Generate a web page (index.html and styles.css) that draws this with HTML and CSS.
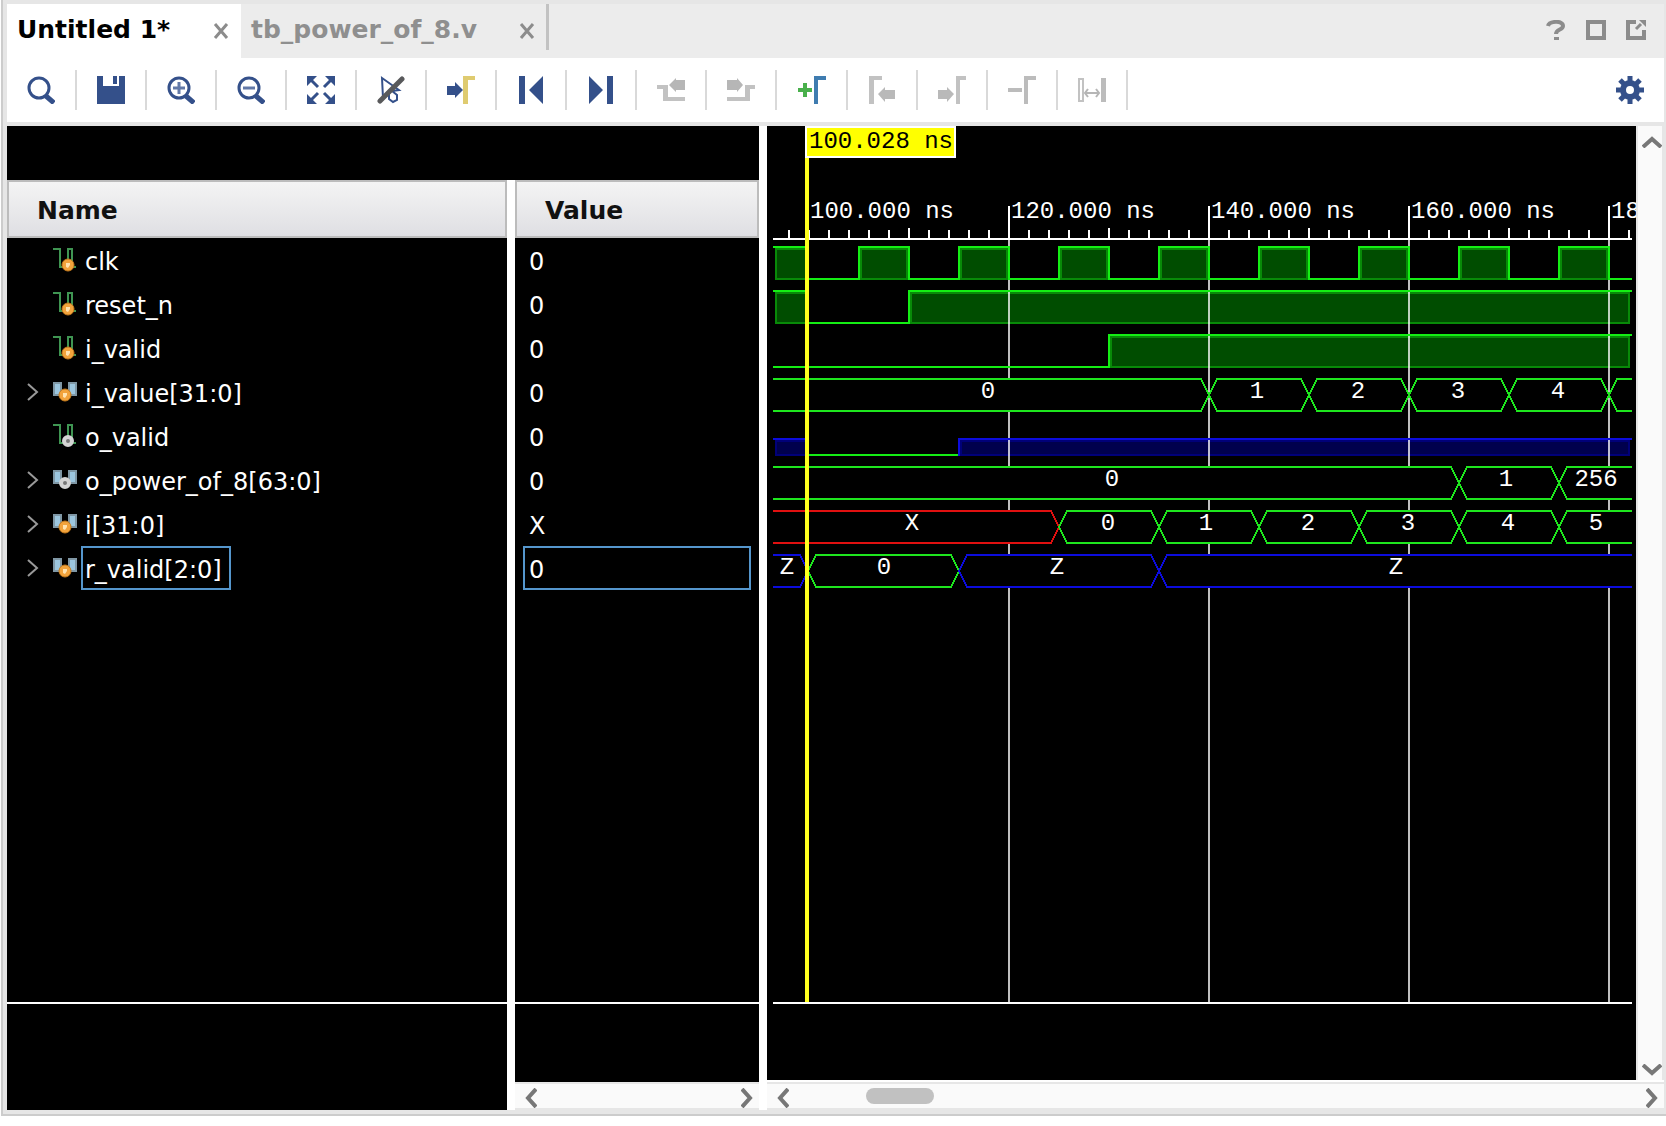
FILE: index.html
```html
<!DOCTYPE html>
<html lang="en">
<head>
<meta charset="utf-8">
<title>Waveform viewer</title>
<link rel="stylesheet" href="styles.css">
</head>
<body>
<svg class="defs" aria-hidden="true">
  <defs>
    <symbol id="close" viewBox="0 0 16 16"><path d="M2 1L14 15M14 1L2 15" stroke="#8c8c8c" stroke-width="3" fill="none"/></symbol>
    <symbol id="left" viewBox="0 0 12 20"><path d="M11 1L3 10L11 19" stroke="#777" stroke-width="4" fill="none"/></symbol>
    <symbol id="right" viewBox="0 0 12 20"><path d="M1 1L9 10L1 19" stroke="#777" stroke-width="4" fill="none"/></symbol>
    <symbol id="up" viewBox="0 0 20 12"><path d="M1 11L10 3L19 11" stroke="#777" stroke-width="4" fill="none"/></symbol>
    <symbol id="down" viewBox="0 0 20 12"><path d="M1 1L10 9L19 1" stroke="#777" stroke-width="4" fill="none"/></symbol>
    <symbol id="expand" viewBox="0 0 12 18"><path d="M1 1L10 9L1 17" stroke="#999" stroke-width="2" fill="none"/></symbol>
    <symbol id="wire" viewBox="0 0 24 24">
      <path d="M0 1H7V19H11M15 19V1H19V19H23" stroke="#3f9552" stroke-width="2" fill="none"/>
    </symbol>
    <symbol id="bus" viewBox="0 0 24 24">
      <path d="M6 10H18V15L15 18H9L6 15Z" fill="#7f97a5"/>
      <path d="M1 3H8V15H1ZM16 3H23V15H16Z" fill="#9cc6de" stroke="#7f97a5" stroke-width="2"/>
    </symbol>
    <symbol id="dot-in" viewBox="0 0 14 14"><circle cx="7" cy="7" r="6" fill="#f2a33c" stroke="#c47a1c"/><path d="M5 9V5H9V7L7 10Z" fill="#ffe3b0"/></symbol>
    <symbol id="dot-out" viewBox="0 0 14 14"><circle cx="7" cy="7" r="4" fill="#777" stroke="#d4d4d4" stroke-width="4"/></symbol>
  </defs>
</svg>

<main class="app">
  <header class="tabs">
    <div class="tab tab-active"><a href="#wave">Untitled 1*</a><button class="close" aria-label="Close Untitled 1"><svg width="16" height="16"><use href="#close"/></svg></button></div>
    <div class="tab"><a href="#source">tb_power_of_8.v</a><button class="close" aria-label="Close tb_power_of_8.v"><svg width="16" height="16"><use href="#close"/></svg></button></div>
    <div class="window-tools">
      <button aria-label="Help"><svg width="20" height="20" viewBox="0 0 20 20"><path d="M2 6C3 1 17 0 17 6C17 10 10 9 10 14" fill="none" stroke="#8c8c8c" stroke-width="4"/><path d="M8 17h5v3h-5z" fill="#8c8c8c"/></svg></button>
      <button aria-label="Maximize"><svg width="20" height="20" viewBox="0 0 20 20"><path d="M2 2H18V18H2Z" fill="none" stroke="#8c8c8c" stroke-width="4"/></svg></button>
      <button aria-label="Float"><svg width="20" height="20" viewBox="0 0 20 20"><path d="M10 2H2V18H18V10" fill="none" stroke="#8c8c8c" stroke-width="4"/><path d="M10 9L15 4" stroke="#8c8c8c" stroke-width="3"/><path d="M13 0H20V7Z" fill="#8c8c8c"/></svg></button>
    </div>
  </header>

  <nav class="toolbar" aria-label="Waveform tools">
    <button aria-label="Search"><svg viewBox="0 0 28 28"><circle cx="12" cy="12" r="10" fill="none" stroke="#34508a" stroke-width="3"/><path d="M19 20L27 27" stroke="#34508a" stroke-width="5"/></svg></button>
    <button aria-label="Save"><svg viewBox="0 0 28 28"><path d="M0 0H6V10H22V0H28V28H0Z M16 0H20V8H16Z" fill="#34508a"/></svg></button>
    <button aria-label="Zoom in"><svg viewBox="0 0 28 28"><circle cx="12" cy="12" r="10" fill="none" stroke="#34508a" stroke-width="3"/><path d="M19 20L27 27" stroke="#34508a" stroke-width="5"/><path d="M6 12H18M12 6V18" stroke="#6279a8" stroke-width="3"/></svg></button>
    <button aria-label="Zoom out"><svg viewBox="0 0 28 28"><circle cx="12" cy="12" r="10" fill="none" stroke="#34508a" stroke-width="3"/><path d="M19 20L27 27" stroke="#34508a" stroke-width="5"/><path d="M6 12H18" stroke="#6279a8" stroke-width="3"/></svg></button>
    <button aria-label="Zoom fit"><svg viewBox="0 0 28 28"><path d="M0 0H10L0 10ZM28 0V10L18 0ZM0 28V18L10 28ZM28 28H18L28 18Z" fill="#34508a"/><path d="M3 3L11 11M25 3L17 11M3 25L11 17M25 25L17 17" stroke="#34508a" stroke-width="3"/></svg></button>
    <button aria-label="Snap to transition off"><svg viewBox="0 0 28 28"><path d="M5 2L22 14L15 15L20 19V24L16 26L12 23V18L6 22Z" fill="none" stroke="#34508a" stroke-width="2"/><path d="M3 25L25 3" stroke="#58595b" stroke-width="5" stroke-linecap="round"/></svg></button>
    <button aria-label="Go to cursor"><svg viewBox="0 0 28 28"><path d="M0 10H8V6L16 14L8 22V19H0Z" fill="#34508a"/><path d="M16 0H28V4H21V28H16Z" fill="#dfcb70"/></svg></button>
    <button aria-label="Go to start"><svg viewBox="0 0 28 28"><path d="M2 0H8V28H2ZM26 0V28L12 14Z" fill="#34508a"/></svg></button>
    <button aria-label="Go to end"><svg viewBox="0 0 28 28"><path d="M2 0V28L16 14ZM20 0H26V28H20Z" fill="#34508a"/></svg></button>
    <button aria-label="Previous transition"><svg viewBox="0 0 28 28"><path d="M0 9H11V21H28V25H6V13H0Z" fill="#c2c2c2"/><path d="M12 9L19 2V4H28V14H19V16Z" fill="#b6b6b6"/></svg></button>
    <button aria-label="Next transition"><svg viewBox="0 0 28 28"><path d="M28 9H18V21H0V25H23V13H28Z" fill="#c2c2c2"/><path d="M16 9L10 2V4H0V14H10V16Z" fill="#b6b6b6"/></svg></button>
    <button class="wide" aria-label="Add marker"><svg viewBox="0 0 28 28"><path d="M0 14H14M7 7V21" stroke="#49b04c" stroke-width="4"/><path d="M16 0H28V4H20V28H16Z" fill="#3f7cb0"/></svg></button>
    <button aria-label="Previous marker"><svg viewBox="0 0 28 28"><path d="M1 0H14V4H6V28H1Z" fill="#c2c2c2"/><path d="M10 18L17 11V14H27V23H17V26Z" fill="#b9b9b9"/></svg></button>
    <button aria-label="Next marker"><svg viewBox="0 0 28 28"><path d="M18 0H28V4H22V28H18Z" fill="#c2c2c2"/><path d="M16 18L9 11V14H0V23H9V26Z" fill="#b9b9b9"/></svg></button>
    <button aria-label="Remove marker"><svg viewBox="0 0 28 28"><path d="M0 12H14V16H0ZM16 0H28V4H20V28H16Z" fill="#bcbcbc"/></svg></button>
    <button aria-label="Swap cursors"><svg viewBox="0 0 28 28"><path d="M1 3H5V25H1Z" fill="none" stroke="#c2c2c2" stroke-width="2"/><path d="M23 2H28V26H23Z" fill="#bcbcbc"/><path d="M7 17H21M10 13L7 17L10 21M18 13L21 17L18 21" fill="none" stroke="#b6b6b6" stroke-width="2"/></svg></button>
    <button class="settings" aria-label="Settings"><svg viewBox="0 0 28 28"><circle cx="14" cy="14" r="7" fill="none" stroke="#34508a" stroke-width="6"/><path d="M14 0V5M14 23V28M0 14H5M23 14H28M4 4L8 8M20 20L24 24M24 4L20 8M4 24L8 20" stroke="#34508a" stroke-width="5"/></svg></button>
  </nav>

  <section class="workspace">
    <div class="signals">
      <div class="pane name-pane">
        <table>
          <thead><tr><th>Name</th></tr></thead>
          <tbody>
            <tr><td><div class="signal"><span class="toggle"></span><svg class="kind"><use href="#wire"/><use href="#dot-in" x="8" y="10" width="14" height="14"/></svg><span class="label">clk</span></div></td></tr>
            <tr><td><div class="signal"><span class="toggle"></span><svg class="kind"><use href="#wire"/><use href="#dot-in" x="8" y="10" width="14" height="14"/></svg><span class="label">reset_n</span></div></td></tr>
            <tr><td><div class="signal"><span class="toggle"></span><svg class="kind"><use href="#wire"/><use href="#dot-in" x="8" y="10" width="14" height="14"/></svg><span class="label">i_valid</span></div></td></tr>
            <tr><td><div class="signal"><button class="toggle" aria-label="Expand i_value"><svg width="12" height="18"><use href="#expand"/></svg></button><svg class="kind"><use href="#bus"/><use href="#dot-in" x="5" y="8" width="14" height="14"/></svg><span class="label">i_value[31:0]</span></div></td></tr>
            <tr><td><div class="signal"><span class="toggle"></span><svg class="kind"><use href="#wire"/><use href="#dot-out" x="8" y="10" width="14" height="14"/></svg><span class="label">o_valid</span></div></td></tr>
            <tr><td><div class="signal"><button class="toggle" aria-label="Expand o_power_of_8"><svg width="12" height="18"><use href="#expand"/></svg></button><svg class="kind"><use href="#bus"/><use href="#dot-out" x="5" y="8" width="14" height="14"/></svg><span class="label">o_power_of_8[63:0]</span></div></td></tr>
            <tr><td><div class="signal"><button class="toggle" aria-label="Expand i"><svg width="12" height="18"><use href="#expand"/></svg></button><svg class="kind"><use href="#bus"/><use href="#dot-in" x="5" y="8" width="14" height="14"/></svg><span class="label">i[31:0]</span></div></td></tr>
            <tr><td><div class="signal"><button class="toggle" aria-label="Expand r_valid"><svg width="12" height="18"><use href="#expand"/></svg></button><svg class="kind"><use href="#bus"/><use href="#dot-in" x="5" y="8" width="14" height="14"/></svg><span class="label selected">r_valid[2:0]</span></div></td></tr>
          </tbody>
        </table>
        <div class="pane-foot"></div>
      </div>
      <div class="pane value-pane">
        <table>
          <thead><tr><th>Value</th></tr></thead>
          <tbody>
            <tr><td><div class="value">0</div></td></tr>
            <tr><td><div class="value">0</div></td></tr>
            <tr><td><div class="value">0</div></td></tr>
            <tr><td><div class="value">0</div></td></tr>
            <tr><td><div class="value">0</div></td></tr>
            <tr><td><div class="value">0</div></td></tr>
            <tr><td><div class="value">X</div></td></tr>
            <tr><td><div class="value selected">0</div></td></tr>
          </tbody>
        </table>
        <div class="pane-foot"></div>
        <div class="hscroll">
          <button aria-label="Scroll values left"><svg width="12" height="20"><use href="#left"/></svg></button>
          <button class="end" aria-label="Scroll values right"><svg width="12" height="20"><use href="#right"/></svg></button>
        </div>
      </div>
    </div>

    <div class="waves" id="wave">
      <div class="wave-row">
        <div class="wave-view">
          <svg class="plot">
            <defs>
              <pattern id="minor" patternUnits="userSpaceOnUse" x="26" y="104" width="20" height="8"><rect x="9" width="2" height="8" fill="#fff"/></pattern>
              <pattern id="mid" patternUnits="userSpaceOnUse" x="126" y="102" width="200" height="10"><rect x="9" width="2" height="10" fill="#fff"/></pattern>
            </defs>

            <!-- time ruler -->
            <rect y="104" width="100%" height="8" fill="url(#minor)"/>
            <rect y="102" width="100%" height="10" fill="url(#mid)"/>
            <path class="major" d="M236 80V113M436 80V113M636 80V113M836 80V113"/>
            <line class="major" x1="0" x2="100%" y1="113" y2="113"/>
            <g class="time">
              <text x="37" y="92">100.000 ns</text>
              <text x="238" y="92">120.000 ns</text>
              <text x="438" y="92">140.000 ns</text>
              <text x="638" y="92">160.000 ns</text>
              <text x="838" y="92">180.000 ns</text>
            </g>

            <!-- level fills -->
            <g class="high">
              <path d="M3 123H34V153H3ZM88 123H134V153H88ZM188 123H234V153H188ZM288 123H334V153H288ZM388 123H434V153H388ZM488 123H534V153H488ZM588 123H634V153H588ZM688 123H734V153H688ZM788 123H834V153H788Z"/>
              <path d="M3 167H34V197H3ZM138 167H856V197H138Z"/>
              <path d="M338 211H856V241H338Z"/>
            </g>
            <path class="high-z" d="M3 315H33V329H3ZM188 315H856V329H188Z"/>

            <!-- grid -->
            <g class="grid">
              <line x1="236" x2="236" y1="114" y2="100%"/>
              <line x1="436" x2="436" y1="114" y2="100%"/>
              <line x1="636" x2="636" y1="114" y2="100%"/>
              <line x1="836" x2="836" y1="114" y2="100%"/>
            </g>

            <!-- scalar traces -->
            <path class="trace" d="M0 121H35V153H86V121H136V153H186V121H236V153H286V121H336V153H386V121H436V153H486V121H536V153H586V121H636V153H686V121H736V153H786V121H836V153H859"/>
            <path class="trace" d="M0 165H35V197H136V165H859"/>
            <path class="trace" d="M0 241H336V209H859"/>
            <path class="trace" d="M34 329H187"/>
            <path class="trace z" d="M0 313H33M186 330V313H859"/>

            <!-- bus traces -->
            <g class="bus">
              <path d="M0 253H428L436 269L428 285H0"/>
              <path d="M444 253H528L536 269L528 285H444L436 269ZM544 253H628L636 269L628 285H544L536 269ZM644 253H728L736 269L728 285H644L636 269ZM744 253H828L836 269L828 285H744L736 269Z"/>
              <path d="M859 253H844L836 269L844 285H859"/>

              <path d="M0 341H678L686 357L678 373H0"/>
              <path d="M694 341H778L786 357L778 373H694L686 357Z"/>
              <path d="M859 341H794L786 357L794 373H859"/>

              <path class="x" d="M0 385H278L286 401L278 417H0"/>
              <path d="M294 385H378L386 401L378 417H294L286 401ZM394 385H478L486 401L478 417H394L386 401ZM494 385H578L586 401L578 417H494L486 401ZM594 385H678L686 401L678 417H594L586 401ZM694 385H778L786 401L778 417H694L686 401Z"/>
              <path d="M859 385H794L786 401L794 417H859"/>

              <path class="z" d="M0 429H27L35 445L27 461H0"/>
              <path d="M43 429H178L186 445L178 461H43L35 445Z"/>
              <path class="z" d="M194 429H378L386 445L378 461H194L186 445Z"/>
              <path class="z" d="M859 429H394L386 445L394 461H859"/>
            </g>
            <g class="bus-text">
              <text x="215" y="272">0</text><text x="484" y="272">1</text><text x="585" y="272">2</text><text x="685" y="272">3</text><text x="785" y="272">4</text>
              <text x="339" y="360">0</text><text x="733" y="360">1</text><text x="823" y="360">256</text>
              <text x="139" y="404">X</text><text x="335" y="404">0</text><text x="433" y="404">1</text><text x="535" y="404">2</text><text x="635" y="404">3</text><text x="735" y="404">4</text><text x="823" y="404">5</text>
              <text x="14" y="448">Z</text><text x="111" y="448">0</text><text x="284" y="448">Z</text><text x="623" y="448">Z</text>
            </g>

            <!-- main cursor -->
            <svg class="cursor-layer"><line class="cursor" x1="34" x2="34" y1="32" y2="100%"/></svg>
            <rect x="33" y="1" width="149" height="30" fill="#ff0" stroke="#fff" stroke-width="2"/>
            <text class="cursor-time" x="36" y="22">100.028 ns</text>
          </svg>
        </div>
        <div class="vscroll">
          <button aria-label="Scroll up"><svg width="20" height="12"><use href="#up"/></svg></button>
          <button class="end" aria-label="Scroll down"><svg width="20" height="12"><use href="#down"/></svg></button>
        </div>
      </div>
      <div class="hscroll">
        <button aria-label="Scroll waves left"><svg width="12" height="20"><use href="#left"/></svg></button>
        <span class="thumb"></span>
        <button class="end" aria-label="Scroll waves right"><svg width="12" height="20"><use href="#right"/></svg></button>
      </div>
    </div>
  </section>
</main>
</body>
</html>
```
FILE: styles.css
```css
* { box-sizing: border-box; }

body {
  margin: 0;
  background: #fff;
  color: #000;
  font: 24px "DejaVu Sans", sans-serif;
}

button {
  display: flex;
  align-items: center;
  justify-content: center;
  margin: 0;
  padding: 0;
  border: 0;
  background: none;
}

svg { display: block; flex: none; }

.defs { position: absolute; width: 0; height: 0; }

.app {
  display: flex;
  flex-direction: column;
  min-height: calc(100vh - 10px);
  margin: 0 0 10px 1px;
  padding: 4px 2px 4px 4px;
  border-left: 2px solid #ccc;
  border-bottom: 2px solid #ccc;
  background: #e6e6e6;
}

/* tabs */
.tabs { display: flex; height: 54px; background: #ececec; }

.tab {
  display: flex;
  align-items: center;
  justify-content: space-between;
  position: relative;
  width: 308px;
  padding: 0 14px 4px 10px;
  font-size: 25px;
  font-weight: bold;
}

.tab a { color: #8f8f8f; text-decoration: none; }
.tab-active { width: 234px; padding-right: 12px; background: #fff; }
.tab-active a { color: #000; }
.tab .close { width: 16px; height: 16px; margin-top: 4px; }

.tab:not(.tab-active)::after {
  content: "";
  position: absolute;
  top: 0;
  right: 0;
  width: 3px;
  height: 46px;
  background: #c2c2c2;
}

.window-tools { display: flex; margin-left: auto; padding: 0 8px 2px 0; }
.window-tools button { width: 40px; }

/* toolbar */
.toolbar {
  display: flex;
  align-items: center;
  height: 64px;
  background: #fff;
}

.toolbar button {
  width: 70px;
  height: 40px;
  border-right: 2px solid #d9d9d9;
}

.toolbar .wide { width: 71px; }
.toolbar .settings { width: 68px; margin-left: auto; border: 0; }
.toolbar svg { width: 28px; height: 28px; }

/* workspace */
.workspace { display: flex; flex: 1; margin-top: 4px; background: #fff; }

.signals {
  display: grid;
  grid-template-columns: 500px 244px;
  column-gap: 8px;
  width: 752px;
  flex: none;
  margin-right: 8px;
  border-top: 54px solid #000;
}

.pane { display: flex; flex-direction: column; background: #000; color: #fff; }

table { width: 100%; border-collapse: separate; border-spacing: 0; }

th {
  height: 58px;
  padding: 2px 28px 0;
  border: 2px solid #bcbcbc;
  background: linear-gradient(#f4f4f4, #dfdfe3);
  color: #111;
  font-size: 25px;
  text-align: left;
}

td { height: 44px; padding: 0; }

.signal { display: flex; align-items: center; padding-left: 20px; }
.toggle { width: 12px; margin-right: 14px; }
.kind { width: 24px; height: 24px; margin-right: 4px; }

.label, .value {
  height: 44px;
  border: 2px solid transparent;
  line-height: 40px;
  white-space: nowrap;
}

.label { padding: 2px 7px 0 2px; }
.value { margin: 0 8px; padding: 2px 0 0 4px; }
.selected { border-color: #5596cc; }

.pane-foot {
  height: 108px;
  margin-top: auto;
  border-top: 2px solid #fff;
}

.value-pane .pane-foot { height: 80px; }

/* scroll bars */
.hscroll {
  display: flex;
  align-items: center;
  height: 28px;
  padding: 4px 5px 0 10px;
  border: solid #e6e6e6;
  border-width: 2px 0;
  background: #fafafa;
}

.hscroll button { width: 12px; }
.hscroll .end { margin-left: auto; margin-right: 1px; }

.thumb {
  width: 68px;
  height: 16px;
  margin: 0 0 4px 77px;
  border-radius: 8px;
  background: #c1c1c1;
}

.vscroll {
  display: flex;
  flex-direction: column;
  justify-content: space-between;
  align-items: flex-end;
  width: 26px;
  padding: 10px 0 4px;
  border-left: 2px solid #e6e6e6;
  background: #fafafa;
}

/* waveforms */
.waves { display: flex; flex: 1; flex-direction: column; min-width: 0; }
.wave-row { display: flex; flex: 1; margin-bottom: 2px; border-right: 2px solid #e6e6e6; }

.wave-view {
  display: flex;
  flex: 1;
  min-width: 0;
  padding: 0 4px 76px 6px;
  overflow: hidden;
  background: #000;
}

.plot {
  flex: 1;
  min-width: 0;
  height: auto;
  min-height: 500px;
  border-bottom: 2px solid #fff;
  overflow: visible;
  shape-rendering: crispEdges;
}

.plot text { font: 24px "Liberation Mono", monospace; fill: #fff; }
.plot .cursor-time { fill: #000; }
.bus-text { text-anchor: middle; }
.major { fill: none; stroke: #fff; stroke-width: 2; }
.grid { stroke: #fff; stroke-opacity: .75; stroke-width: 2; }
.high { fill: #004d00; stroke: #088a08; stroke-width: 2; }
.high-z { fill: #00004d; stroke: #000078; stroke-width: 2; }
.trace { fill: none; stroke: #14ee14; stroke-width: 2; }
.bus path { fill: #000; stroke: #1ee61e; stroke-width: 2; }
.bus .x { stroke: #e01010; }
.trace.z, .bus .z { stroke: #0c0cdc; }
.cursor-layer { overflow: visible; }
.cursor { stroke: #ffff1e; stroke-width: 4; }
```
